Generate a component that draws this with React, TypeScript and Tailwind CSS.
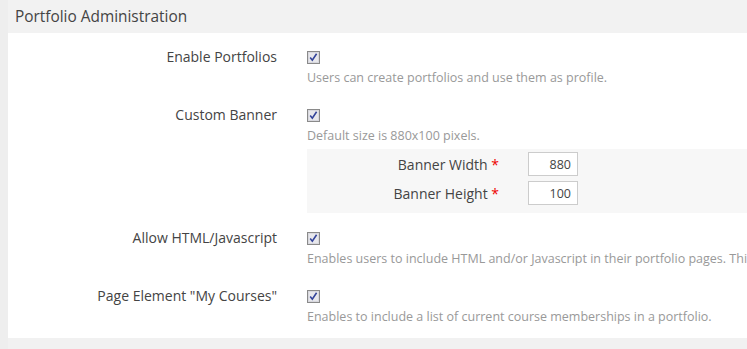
const font = { fontFamily: '"Open Sans", "Noto Sans", sans-serif' };

function Check() {
  return (
    <svg width="13" height="13" viewBox="0 0 13 13" className="block">
      <rect x="0.5" y="0.5" width="12" height="12" fill="#f4f4f4" stroke="#8a8a8a" />
      <rect x="1.5" y="1.5" width="10" height="10" fill="#e8e8ec" stroke="#d8d8de" />
      <path d="M3.2 6.6 L5.3 9.2 L9.6 2.8" fill="none" stroke="#34449a" strokeWidth="1.6" />
    </svg>
  );
}

function Row({ label, desc, children }: { label: string; desc: string; children?: React.ReactNode }) {
  return (
    <div className="flex">
      <div className="w-[269px] shrink-0 text-right text-[14px] leading-[20px] text-[#444] whitespace-nowrap">{label}</div>
      <div className="ml-[30px] flex-1 min-w-0">
        <div className="h-[20px] flex items-center">
          <Check />
        </div>
        <div className="text-[12.5px] leading-[21px] text-[#999] whitespace-nowrap">{desc}</div>
        {children}
      </div>
    </div>
  );
}

function Field({ label, value }: { label: string; value: string }) {
  return (
    <div className="flex items-center">
      <div className="w-[192px] text-right text-[14px] text-[#444] whitespace-nowrap">
        {label} <span className="text-[#e00]">*</span>
      </div>
      <input
        readOnly
        value={value}
        className="ml-[29px] w-[50px] h-[24px] border border-[#ccc] bg-white text-right pr-[6px] text-[12.5px] text-[#444] outline-none"
        style={font}
      />
    </div>
  );
}

export default function App() {
  return (
    <div className="w-[747px] h-[349px] overflow-hidden bg-[#eeeeee] pl-[8px]" style={font}>
      <div className="h-[33px] bg-[#f2f2f2] pl-[7px] flex items-center text-[15.4px] text-[#444]">Portfolio Administration</div>
      <div className="bg-white pt-[14px] pb-[11px] flex flex-col">
        <Row label="Enable Portfolios" desc="Users can create portfolios and use them as profile." />
        <div className="mt-[17px]">
          <Row label="Custom Banner" desc="Default size is 880x100 pixels.">
            <div className="mt-[3px] bg-[#f7f7f7] pt-[3px] pb-[8px] flex flex-col gap-[5px]">
              <Field label="Banner Width" value="880" />
              <Field label="Banner Height" value="100" />
            </div>
          </Row>
        </div>
        <div className="mt-[15px]">
          <Row
            label="Allow HTML/Javascript"
            desc="Enables users to include HTML and/or Javascript in their portfolio pages. This may be a security risk."
          />
        </div>
        <div className="mt-[17px]">
          <Row label={'Page Element "My Courses"'} desc="Enables to include a list of current course memberships in a portfolio." />
        </div>
      </div>
      <div className="h-[20px] bg-[#f1f1f1]" />
    </div>
  );
}
